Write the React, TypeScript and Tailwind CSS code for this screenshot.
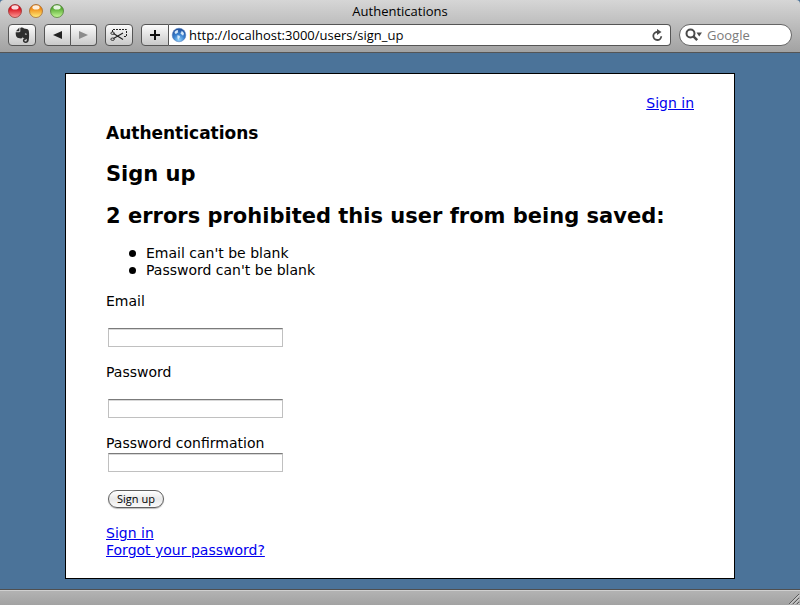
import React from 'react';

const lights = [
  { name: 'Close', edge: '#8e1b1c', dark: '#d8101c', light: '#ff9c98' },
  { name: 'Minimize', edge: '#9a5717', dark: '#f08a14', light: '#fff080' },
  { name: 'Zoom', edge: '#3c6d22', dark: '#58ac34', light: '#c8fa9c' },
];

const errors = ["Email can't be blank", "Password can't be blank"];

const toolButton =
  'flex h-[22px] items-center justify-center border border-[#555] bg-linear-to-b from-[#fcfcfc] to-[#c9c9c9] text-[#1a1a1a]';

const textField =
  'block h-[19px] w-[175px] border border-[#c0c0c0] border-t-[#7b7b7b] bg-white px-1 text-[11px] shadow-[inset_0_1px_0_#d8d8d8] outline-none';

const TrafficLights: React.FC = () => (
  <div className="flex gap-[7px]">
    {lights.map((l) => (
      <button key={l.name} type="button" aria-label={l.name} className="block">
        <svg width="14" height="14" viewBox="0 0 14 14" className="block">
          <defs>
            <linearGradient id={l.name} x1="0" y1="0" x2="0" y2="1">
              <stop offset="0.3" stopColor={l.dark} />
              <stop offset="1" stopColor={l.light} />
            </linearGradient>
          </defs>
          <circle cx="7" cy="7" r="6.5" fill={`url(#${l.name})`} stroke={l.edge} strokeOpacity="0.65" />
          <ellipse cx="7" cy="3.4" rx="3.6" ry="2.1" fill="#fff" opacity="0.85" />
        </svg>
      </button>
    ))}
  </div>
);

const ElephantIcon: React.FC = () => (
  <svg width="15" height="17" viewBox="0 0 15 17" className="block">
    <path d="M4.400.6.900 4.200h2.800c.4 0 .7-.3.700-.7z" fill="#2e2e2e" />
    <path
      d="M5.300.9C6.500.2 8.300.5 9 1.400l2.900.5c1.100.2 1.700.9 1.900 2 .5 2.600.4 7-.1 9.600-.3 1.600-1.300 2.500-2.900 2.500-1.800 0-2.900-.9-2.900-2.400 0-1.400.9-2.300 2.300-2.300h.7v1.500h-.6c-.6 0-.9.300-.9.800s.5.900 1.200.9c.8 0 1.200-.6 1.200-1.500 0-1-.5-1.400-1.500-1.500l-2-.3-.4-1.400c-.2 1.300-.9 1.700-1.900 1.700-1.700 0-3.500-.4-4.200-1.400C.9 9 .6 7 .7 5.200h3.400c.8 0 1.200-.4 1.200-1.200z"
      fill="#2e2e2e"
    />
    <path d="M9.900 6.800c.8-.5 1.800-.3 2.100.8-.8-.2-1.400-.3-2.100 0z" fill="#ececec" />
  </svg>
);

const ClipIcon: React.FC = () => (
  <svg width="18" height="14" viewBox="0 0 18 14" className="block" fill="none" stroke="#222">
    <path d="M2.500 4V1.500h14v7H14" strokeDasharray="2 1" />
    <path d="M3.500 5.500 13 11.500M3.500 10.500 13 5" strokeWidth="1.100" />
    <ellipse cx="2.600" cy="5.200" rx="1.800" ry="1.200" strokeWidth="0.900" />
    <ellipse cx="2.600" cy="11.200" rx="1.800" ry="1.200" strokeWidth="0.900" />
  </svg>
);

const GlobeIcon: React.FC = () => (
  <svg width="16" height="16" viewBox="0 0 16 16" className="block shrink-0">
    <defs>
      <radialGradient id="globe" cx="0.5" cy="0.85" r="0.8">
        <stop offset="0" stopColor="#8fd0fa" />
        <stop offset="0.5" stopColor="#3b82cf" />
        <stop offset="1" stopColor="#1f4f9c" />
      </radialGradient>
    </defs>
    <circle cx="8" cy="8" r="6.8" fill="url(#globe)" stroke="#4a76b6" strokeWidth="0.5" />
    <path
      d="M3.500 5 5 3.500 7.200 3 6.800 4.200 7.300 5.200 5.800 6.200 5 7 4 6.400zM6.400 8.200l2 .6.7 1.200-1.200 1.500-.7 1.500-.8-2.200zM10.400 3.800l1.800 1.100.8 1.900-1 1.900-1-1-1.200-.6-.3-1.200 1-.9z"
      fill="#d5e9fa"
    />
  </svg>
);

const Toolbar: React.FC = () => (
  <div className="flex items-center gap-2 px-2">
    <button type="button" aria-label="Clip to notebook" className={`${toolButton} w-7 rounded-[4px]`}>
      <ElephantIcon />
    </button>
    <div className="flex">
      <button type="button" aria-label="Back" className={`${toolButton} w-[27px] rounded-l-[4px]`}>
        <svg width="9" height="8" viewBox="0 0 9 8" fill="#222">
          <path d="M9 0v8L0 4z" />
        </svg>
      </button>
      <button type="button" aria-label="Forward" className={`${toolButton} w-[26px] rounded-r-[4px] border-l-0`}>
        <svg width="9" height="8" viewBox="0 0 9 8" fill="#8c8c8c">
          <path d="M0 0v8l9-4z" />
        </svg>
      </button>
    </div>
    <button type="button" aria-label="Web clip" className={`${toolButton} w-7 rounded-[4px]`}>
      <ClipIcon />
    </button>
    <div className="flex min-w-0 grow">
      <button type="button" aria-label="Add bookmark" className={`${toolButton} w-7 rounded-l-[4px]`}>
        <svg width="10" height="10" viewBox="0 0 10 10" fill="#111">
          <path d="M4 0h2v4h4v2H6v4H4V6H0V4h4z" />
        </svg>
      </button>
      <div className="flex h-[22px] min-w-0 grow items-center rounded-r-[4px] border border-l-0 border-[#555] bg-white pl-[2px] pr-[7px]">
        <GlobeIcon />
        <input
          aria-label="Address"
          defaultValue="http://localhost:3000/users/sign_up"
          className="ml-[2px] min-w-0 grow bg-transparent text-[13px] leading-5 outline-none"
        />
        <button type="button" aria-label="Reload">
          <svg width="12" height="13" viewBox="0 0 12 13" className="block">
            <path d="M6.500 3H6a4 4 0 1 0 4.300 4.300" fill="none" stroke="#4a4a4a" strokeWidth="1.800" />
            <path d="M6 0l4.500 3L6 6z" fill="#4a4a4a" />
          </svg>
        </button>
      </div>
    </div>
    <div className="flex h-[22px] w-[113px] items-center rounded-full border border-[#666] bg-white pl-[5px] pr-2">
      <svg width="18" height="14" viewBox="0 0 18 14" className="block shrink-0">
        <circle cx="5.500" cy="5.500" r="4" fill="none" stroke="#4a4a4a" strokeWidth="2" />
        <path d="M8.200 8.200l4 4" stroke="#4a4a4a" strokeWidth="2.500" />
        <path d="M11.500 4.500H17L14.200 8.500z" fill="#4a4a4a" />
      </svg>
      <input
        type="search"
        aria-label="Search"
        placeholder="Google"
        className="ml-1 w-full min-w-0 bg-transparent text-[13px] leading-5 outline-none placeholder:text-[#7b7b7b]"
      />
    </div>
  </div>
);

const SignUpPage: React.FC = () => (
  <main className="mx-auto w-full max-w-[670px] border border-black bg-white px-10 pt-[21px] pb-[19px] font-['Verdana','DejaVu_Sans',sans-serif] text-[14px] leading-[17px] text-black">
    <nav className="text-right">
      <a href="#sign_in" className="text-[#0000ee] underline">Sign in</a>
    </nav>
    <h1 className="mt-[10px] text-[17px] leading-[22px] font-bold">Authentications</h1>
    <h2 className="mt-[17px] text-[21px] leading-[26px] font-bold">Sign up</h2>
    <form onSubmit={(e) => e.preventDefault()}>
      <h2 className="mt-4 text-[21px] leading-[26px] font-bold">
        {errors.length} errors prohibited this user from being saved:
      </h2>
      <ul className="mt-4 pl-[23px]">
        {errors.map((error) => (
          <li
            key={error}
            className="flex items-center before:mr-[10px] before:size-[7px] before:rounded-full before:bg-black before:content-['']"
          >
            {error}
          </li>
        ))}
      </ul>
      <div className="mt-[14px]">
        <label htmlFor="email" className="block">Email</label>
        <input id="email" type="text" className={`${textField} mt-[18px] ml-[2px]`} />
      </div>
      <div className="mt-[17px]">
        <label htmlFor="password" className="block">Password</label>
        <input id="password" type="password" className={`${textField} mt-[18px] ml-[2px]`} />
      </div>
      <div className="mt-[17px]">
        <label htmlFor="confirmation" className="block">Password confirmation</label>
        <input id="confirmation" type="password" className={`${textField} mt-px ml-[2px]`} />
      </div>
      <button
        type="submit"
        className="mt-[18px] ml-[2px] block h-[18px] w-14 rounded-full border border-[#5f5f5f] bg-linear-to-b from-white via-[#e9e9e9] to-[#fafafa] font-['Lucida_Grande','Open_Sans',sans-serif] text-[11px] leading-4 whitespace-nowrap shadow-[0_1px_1px_#bbb]"
      >
        Sign up
      </button>
    </form>
    <div className="mt-[17px] flex flex-col items-start">
      <a href="#sign_in" className="text-[#0000ee] underline">Sign in</a>
      <a href="#forgot" className="text-[#0000ee] underline">Forgot your password?</a>
    </div>
  </main>
);

const App: React.FC = () => (
  <div className="flex min-h-screen flex-col bg-[#4b7399] font-['Lucida_Grande','Open_Sans',sans-serif] text-black">
    <header className="rounded-t-[4px] border-b border-[#555] bg-linear-to-b from-[#d6d6d6] to-[#a2a2a2] pb-[6px]">
      <div className="grid h-6 grid-cols-[1fr_auto_1fr] items-start px-2 pt-1">
        <TrafficLights />
        <span className="text-[13px] leading-[14px]">Authentications</span>
      </div>
      <Toolbar />
    </header>
    <div className="grow px-4 pt-5 pb-[10px]">
      <SignUpPage />
    </div>
    <footer className="flex h-4 items-end justify-end border-t border-[#4f4f4f] bg-linear-to-b from-[#b4b4b4] to-[#a2a2a2] shadow-[inset_0_1px_0_#d0d0d0]">
      <svg width="12" height="12" viewBox="0 0 12 12" className="block">
        <path d="M1 11 11 1M5 11l6-6M9 11l2-2" stroke="#5a5a5a" />
        <path d="M2 11.500 11.500 2M6 11.500 11.500 6M10 11.500l1.500-1.500" stroke="#e0e0e0" />
      </svg>
    </footer>
  </div>
);

export default App;
